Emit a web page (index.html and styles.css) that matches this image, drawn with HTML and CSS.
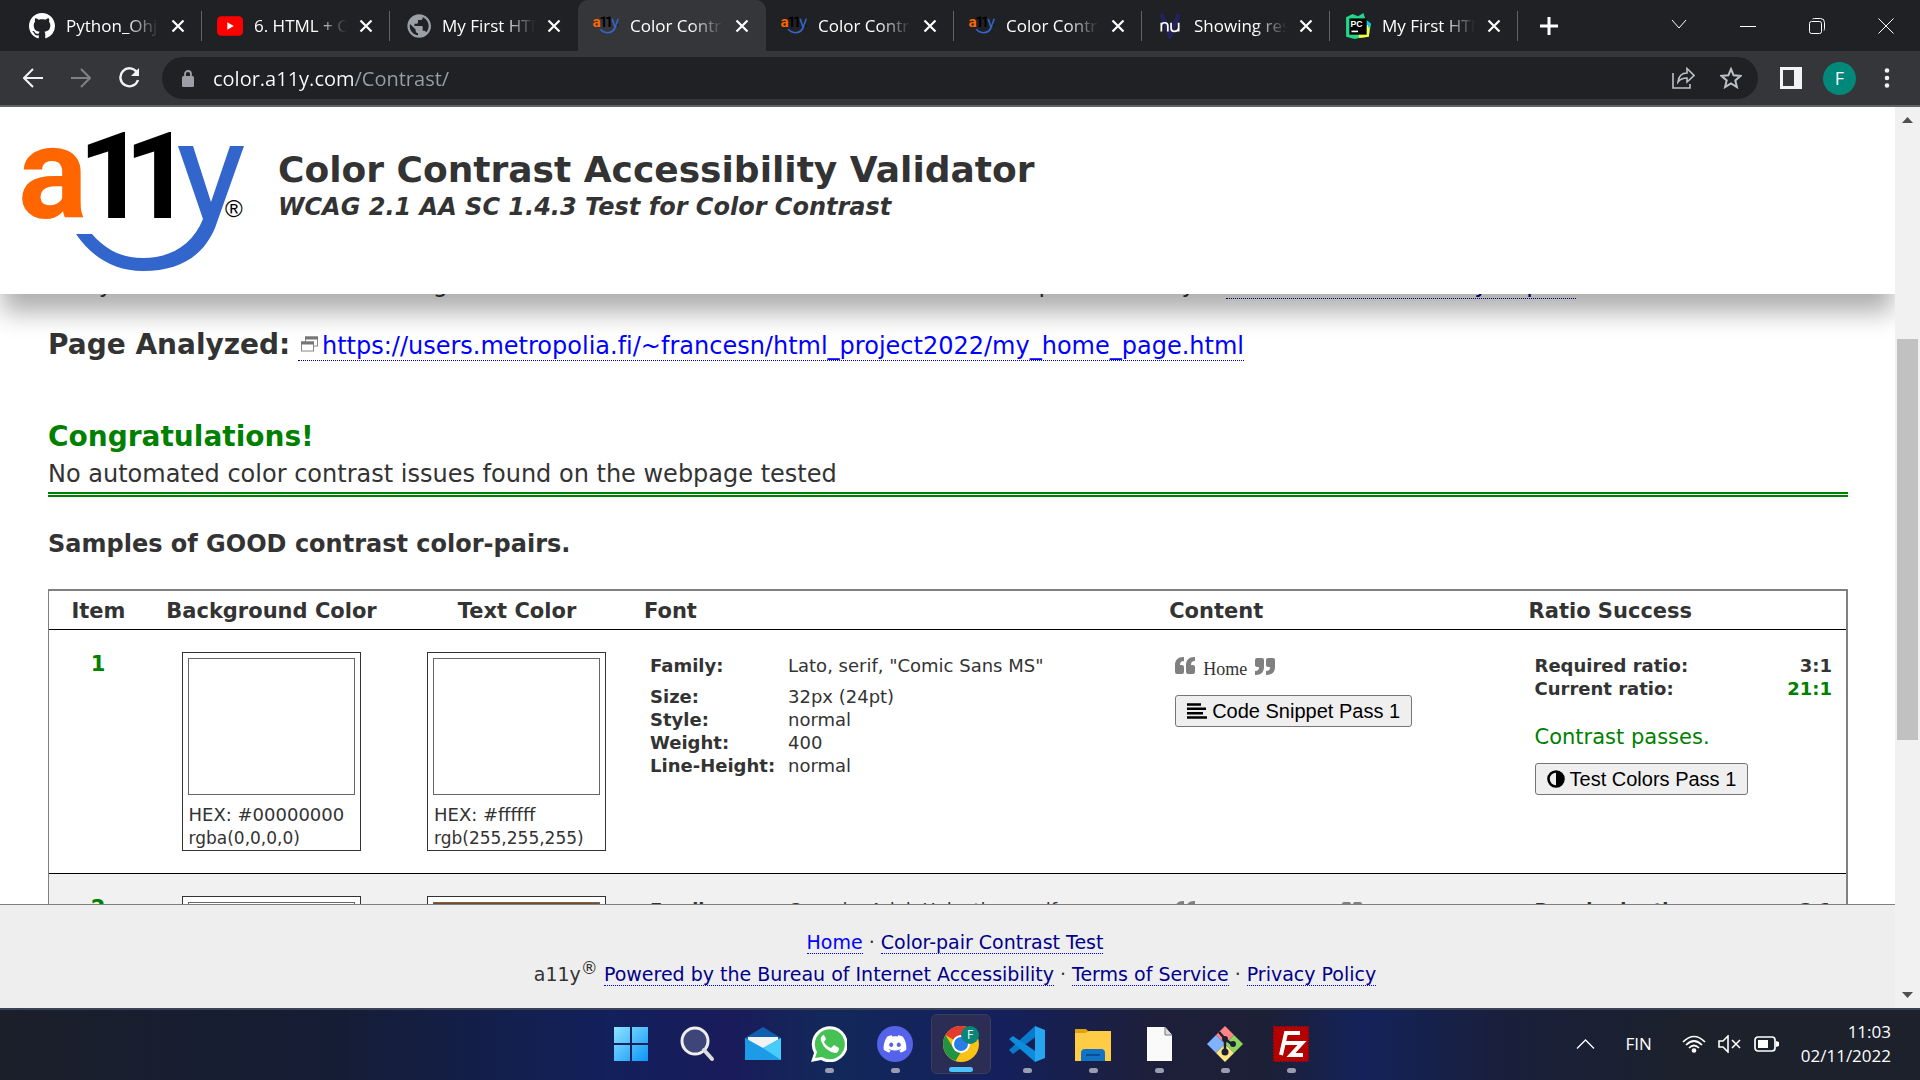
FILE: index.html
```html
<!DOCTYPE html>
<html lang="en">
<head>
<meta charset="utf-8">
<title>Color Contrast Accessibility Validator</title>
<link rel="stylesheet" href="styles.css">
</head>
<body>
<svg class="defs" aria-hidden="true">
  <symbol id="close" viewBox="0 0 14 14"><path d="M1.500 1.500l11 11M12.500 1.500l-11 11" stroke="currentColor" stroke-width="2.200" fill="none"/></symbol>
  <symbol id="a11y" viewBox="0 0 222 139">
    <text x="-4" y="86" font-size="130" class="logo-type" fill="#f60">a</text>
    <text x="56 102" y="86" font-size="120" class="logo-type" fill="#000">11</text>
    <path d="M156 14h15l18 56 19-56h14l-29 82C181 124 158 139 121 139 91 139 69 124 54 102h16c13 15 29 24 51 24 29 0 50-14 60-39z" fill="#36c"/>
    <text x="203" y="85" font-size="24" class="logo-mark">®</text>
  </symbol>
  <symbol id="quote-left" viewBox="0 0 20 18"><path d="M9 0v4C6 4 5 5.500 5 8h2a2 2 0 0 1 2 2v5a2 2 0 0 1-2 2H2a2 2 0 0 1-2-2V8C0 3 3 0 8 0zM20 0v4c-3 0-4 1.500-4 4h2a2 2 0 0 1 2 2v5a2 2 0 0 1-2 2h-5a2 2 0 0 1-2-2V8c0-5 3-8 8-8z" fill="#808080"/></symbol>
</svg>

<header class="browser">
  <div class="tabs">
    <div class="tab"><svg class="favicon" viewBox="0 0 16 16"><path fill="#fff" d="M8 0C3.580 0 0 3.580 0 8c0 3.540 2.290 6.530 5.470 7.590.4.070.55-.17.55-.38 0-.19-.01-.82-.01-1.490-2.010.37-2.530-.49-2.690-.94-.09-.23-.48-.94-.82-1.130-.28-.15-.68-.52-.01-.53.63-.01 1.080.58 1.230.82.72 1.210 1.870.87 2.330.66.07-.52.28-.87.51-1.070-1.780-.2-3.640-.89-3.640-3.950 0-.87.31-1.590.82-2.150-.08-.2-.36-1.020.08-2.120 0 0 .67-.21 2.200.82.64-.18 1.320-.27 2-.27.68 0 1.360.09 2 .27 1.530-1.040 2.200-.82 2.200-.82.44 1.100.16 1.920.08 2.120.51.56.82 1.270.82 2.150 0 3.070-1.870 3.750-3.650 3.950.29.25.54.73.54 1.480 0 1.070-.01 1.930-.01 2.200 0 .21.15.46.55.38A8.013 8.013 0 0 0 16 8c0-4.420-3.580-8-8-8z"/></svg><span class="tab-title">Python_Ohjelmointi</span><button class="tab-close" aria-label="Close tab"><svg><use href="#close"/></svg></button></div>
    <div class="tab"><svg class="favicon" viewBox="0 0 24 24"><rect y="3" width="24" height="18" rx="4" fill="#f00"/><path d="M9.500 8.500v7l6-3.500z" fill="#fff"/></svg><span class="tab-title">6. HTML + CSS</span><button class="tab-close" aria-label="Close tab"><svg><use href="#close"/></svg></button></div>
    <div class="tab tab-last"><svg class="favicon" viewBox="0 1 22 22"><path fill="#9aa0a6" d="M12 2C6.480 2 2 6.480 2 12s4.480 10 10 10 10-4.480 10-10S17.520 2 12 2zm-1 17.930c-3.950-.49-7-3.850-7-7.930 0-.62.08-1.210.21-1.790L9 15v1c0 1.100.9 2 2 2v1.930zm6.900-2.540c-.26-.81-1-1.390-1.900-1.390h-1v-3c0-.55-.45-1-1-1H8v-2h2c.55 0 1-.45 1-1V7h2c1.100 0 2-.9 2-2v-.41c2.930 1.190 5 4.060 5 7.410 0 2.080-.8 3.970-2.100 5.390z"/></svg><span class="tab-title">My First HTML page</span><button class="tab-close" aria-label="Close tab"><svg><use href="#close"/></svg></button></div>
    <div class="tab tab-active"><svg class="favicon" viewBox="0 0 222 222"><use href="#a11y" y="30" width="222" height="150"/></svg><span class="tab-title">Color Contrast</span><button class="tab-close" aria-label="Close tab"><svg><use href="#close"/></svg></button></div>
    <div class="tab"><svg class="favicon" viewBox="0 0 222 222"><use href="#a11y" y="30" width="222" height="150"/></svg><span class="tab-title">Color Contrast</span><button class="tab-close" aria-label="Close tab"><svg><use href="#close"/></svg></button></div>
    <div class="tab"><svg class="favicon" viewBox="0 0 222 222"><use href="#a11y" y="30" width="222" height="150"/></svg><span class="tab-title">Color Contrast</span><button class="tab-close" aria-label="Close tab"><svg><use href="#close"/></svg></button></div>
    <div class="tab"><svg class="favicon" viewBox="0 0 24 24"><path d="M4 1l8 20 8-20" fill="none" stroke="#25215f" stroke-width="4"/><path d="M4 17V9M4 12q0-3 3-3t3 3v5M13 9v5q0 3 3 3t4-3M20 9v8" fill="none" stroke="#fff" stroke-width="1.600"/></svg><span class="tab-title">Showing results</span><button class="tab-close" aria-label="Close tab"><svg><use href="#close"/></svg></button></div>
    <div class="tab"><svg class="favicon" viewBox="0 0 24 24"><path d="M1 4l6-3 5 2 5-3 2 6 5 4-2 12-9 1-4 1-8-2z" fill="#21d789"/><path d="M23 10l-1 12-9 1-1-8z" fill="#fcf84a"/><path d="M19 6l5 4-2 4z" fill="#07c3f2"/><rect x="4" y="5" width="16" height="15" fill="#000"/><text x="5" y="13" class="pc-mark">PC</text><path d="M6 17h6" stroke="#fff" stroke-width="1.500"/></svg><span class="tab-title">My First HTML page</span><button class="tab-close" aria-label="Close tab"><svg><use href="#close"/></svg></button></div>
    <button class="new-tab" aria-label="New tab"><svg width="18" height="18" viewBox="0 0 18 18"><path d="M9 0v18M0 9h18" stroke="#fff" stroke-width="3"/></svg></button>
    <div class="window-controls">
      <button aria-label="Search tabs"><svg width="16" height="16" viewBox="0 0 16 16"><path d="M1 2l7 8 7-8"/></svg></button>
      <button aria-label="Minimize"><svg width="16" height="16" viewBox="0 0 16 16"><path d="M0 8.500h16"/></svg></button>
      <button aria-label="Restore"><svg width="16" height="16" viewBox="0 0 16 16"><rect x=".5" y="3.500" width="12" height="12" rx="2"/><path d="M3.500 1q1-.5 2-.5h6q4 0 4 4v6q0 1-.5 2"/></svg></button>
      <button aria-label="Close"><svg width="16" height="16" viewBox="0 0 16 16"><path d="M.5.5l15 15M15.500.5l-15 15"/></svg></button>
    </div>
  </div>
  <div class="toolbar">
    <button aria-label="Back"><svg width="20" height="20" viewBox="0 0 20 20"><path d="M20 10H2M10 1l-9 9 9 9" fill="none" stroke="#f1f3f4" stroke-width="2"/></svg></button>
    <button aria-label="Forward"><svg width="20" height="20" viewBox="0 0 20 20"><path d="M0 10h18M10 1l9 9-9 9" fill="none" stroke="#808184" stroke-width="2"/></svg></button>
    <button aria-label="Reload"><svg width="22" height="22" viewBox="0 0 22 22"><path d="M18 5.500A9 9 0 1 0 19 13" fill="none" stroke="#f1f3f4" stroke-width="2.400"/><path d="M20 1v8h-8z" fill="#f1f3f4"/></svg></button>
    <div class="omnibox">
      <svg width="12" height="17" viewBox="0 0 12 17"><path d="M3 7V4a3 3 0 0 1 6 0v3" fill="none" stroke="#9aa0a6" stroke-width="1.800"/><rect y="6" width="12" height="11" rx="1.500" fill="#9aa0a6"/></svg>
      <input class="url" type="text" aria-label="Address" value="color.a11y.com/Contrast/">
      <button aria-label="Share"><svg width="23" height="22" viewBox="0 0 23 22" fill="none" stroke="#bdc1c6" stroke-width="1.600"><path d="M1 6v15h17v-4"/><path d="M6 15q1-9 9-9V1.500l7 7-7 6.500v-4q-6 0-9 4z"/></svg></button>
      <button aria-label="Bookmark this page"><svg width="22" height="22" viewBox="0 0 22 22"><path d="M11 2l2.600 6.300 6.900.6-5.200 4.500 1.600 6.700-5.900-3.600-5.900 3.600 1.600-6.700L1.500 8.900l6.900-.6z" fill="none" stroke="#bdc1c6" stroke-width="2"/></svg></button>
    </div>
    <button class="side-panel" aria-label="Side panel"><svg width="22" height="22" viewBox="0 0 22 22"><path d="M0 0h22v22H0zM3 3v16h11V3z" fill="#f1f3f4" fill-rule="evenodd"/></svg></button>
    <button class="avatar">F</button>
    <button class="menu" aria-label="Menu"><svg width="6" height="20" viewBox="0 0 6 20" fill="#f1f3f4"><circle cx="3" cy="2.500" r="2.300"/><circle cx="3" cy="10" r="2.300"/><circle cx="3" cy="17.500" r="2.300"/></svg></button>
  </div>
</header>

<div class="viewport">
  <div class="page">
    <header class="masthead">
      <svg class="logo" viewBox="0 0 222 139" role="img" aria-label="a11y"><use href="#a11y"/></svg>
      <div class="titles">
        <h1>Color Contrast Accessibility Validator</h1>
        <p class="subtitle">WCAG 2.1 AA SC 1.4.3 Test for Color Contrast</p>
      </div>
    </header>

    <main class="content">
      <p class="intro">Many web color contrast issues go unnoticed until each item is reviewed in full so please do try a <a href="#">free Web Accessibility Report</a></p>
      <p class="analyzed"><strong>Page Analyzed:</strong> <a href="#"><svg width="17" height="16" viewBox="0 0 17 16" fill="#fff" stroke="#888"><rect x="4.500" y="1" width="12" height="9"/><path d="M4 2h13" stroke-width="3" stroke="#777"/><rect x=".5" y="6" width="12" height="9"/><path d="M0 7h13" stroke-width="3" stroke="#777"/></svg>https://users.metropolia.fi/~francesn/html_project2022/my_home_page.html</a></p>
      <section class="verdict">
        <h2>Congratulations!</h2>
        <p>No automated color contrast issues found on the webpage tested</p>
      </section>
      <h3>Samples of GOOD contrast color-pairs.</h3>
      <table class="results">
        <colgroup><col class="c-item"><col class="c-bg"><col class="c-text"><col class="c-font"><col class="c-content"><col class="c-ratio"></colgroup>
        <thead>
          <tr><th class="mid">Item</th><th class="mid">Background Color</th><th class="mid">Text Color</th><th>Font</th><th>Content</th><th>Ratio Success</th></tr>
        </thead>
        <tbody>
          <tr>
            <td class="item">1</td>
            <td class="color"><div class="swatch"><div class="chip"></div><p>HEX: #00000000</p><p class="rgb">rgba(0,0,0,0)</p></div></td>
            <td class="color"><div class="swatch"><div class="chip"></div><p>HEX: #ffffff</p><p class="rgb">rgb(255,255,255)</p></div></td>
            <td><dl class="font-info"><dt>Family:</dt><dd class="family">Lato, serif, "Comic Sans MS"</dd><dt>Size:</dt><dd>32px (24pt)</dd><dt>Style:</dt><dd>normal</dd><dt>Weight:</dt><dd>400</dd><dt>Line-Height:</dt><dd>normal</dd></dl></td>
            <td><div class="sample"><svg class="quote"><use href="#quote-left"/></svg><span>Home</span><svg class="quote quote-right"><use href="#quote-left"/></svg></div>
              <button class="action"><svg width="20" height="16" viewBox="0 0 20 16"><path d="M0 1.500h14M0 5.800h19M0 10.200h16M0 14.500h20" stroke="#000" stroke-width="2.600"/></svg>Code Snippet Pass 1</button></td>
            <td><dl class="ratio"><dt>Required ratio:</dt><dd>3:1</dd><dt>Current ratio:</dt><dd class="good">21:1</dd></dl>
              <p class="passes">Contrast passes.</p>
              <button class="action"><svg width="18" height="18" viewBox="0 0 18 18"><circle cx="9" cy="9" r="7.500" fill="none" stroke="#000" stroke-width="2.600"/><path d="M9 1a8 8 0 0 1 0 16z"/></svg>Test Colors Pass 1</button></td>
          </tr>
          <tr>
            <td class="item">2</td>
            <td class="color"><div class="swatch"><div class="chip"></div><p>HEX: #ffffff</p></div></td>
            <td class="color"><div class="swatch"><div class="chip chip-brown"></div><p>HEX: #8b4513</p></div></td>
            <td><dl class="font-info"><dt>Family:</dt><dd class="family">Georgia, Arial, Helvetica, serif</dd></dl></td>
            <td><div class="sample"><svg class="quote"><use href="#quote-left"/></svg><span>My First webpage</span><svg class="quote quote-right"><use href="#quote-left"/></svg></div></td>
            <td><dl class="ratio"><dt>Required ratio:</dt><dd>3:1</dd></dl></td>
          </tr>
        </tbody>
      </table>
    </main>

    <footer class="footer">
      <p><a class="home" href="#">Home</a> · <a href="#">Color-pair Contrast Test</a></p>
      <p>a11y<sup>®</sup> <a href="#">Powered by the Bureau of Internet Accessibility</a> · <a href="#">Terms of Service</a> · <a href="#">Privacy Policy</a></p>
    </footer>
  </div>
  <div class="scrollbar">
    <svg width="11" height="6" viewBox="0 0 11 6"><path d="M5.500 0L11 6H0z" fill="#505050"/></svg>
    <div class="track"><div class="thumb"></div></div>
    <svg width="11" height="6" viewBox="0 0 11 6"><path d="M0 0h11L5.500 6z" fill="#505050"/></svg>
  </div>
</div>

<footer class="taskbar">
  <nav class="apps">
    <button class="app" aria-label="Start"><svg viewBox="0 0 36 36"><defs><linearGradient id="win" x2="1" y2="1"><stop stop-color="#8fe3ff"/><stop offset="1" stop-color="#0a96f8"/></linearGradient></defs><path d="M1 1h16v16H1zM19 1h16v16H19zM1 19h16v16H1zM19 19h16v16H19z" fill="url(#win)"/></svg></button>
    <button class="app" aria-label="Search"><svg viewBox="0 0 36 36"><circle cx="16" cy="15" r="13" fill="#3e4679" stroke="#eee" stroke-width="3"/><path d="M25 24l8 9" stroke="#ddd" stroke-width="4" stroke-linecap="round"/></svg></button>
    <button class="app" aria-label="Mail"><svg viewBox="0 0 36 36"><path d="M0 12L18 1l18 11v10H0z" fill="#0f5fae"/><path d="M3 11h30v8L18 25 3 19z" fill="#f3f3f3"/><path d="M0 12l18 10 18-10v22H0z" fill="#1d9be6"/><path d="M36 12v22L18 22z" fill="#46cdfb"/></svg></button>
    <button class="app running" aria-label="WhatsApp"><svg viewBox="0 0 36 36"><path d="M0 36l3-9A18 18 0 1 1 10 34z" fill="#fff"/><path d="M4 32l2-6A15 15 0 1 1 11 31z" fill="#46c254"/><path d="M12 9q-3 2-2 6 4 10 14 12 4 0 4-5l-5-3-3 3q-5-2-7-6l2-3-2-4z" fill="#fff"/></svg></button>
    <button class="app running" aria-label="Discord"><svg viewBox="0 0 36 36"><circle cx="18" cy="18" r="18" fill="#5562ea"/><path transform="translate(6.600 6.500) scale(.95)" fill="#fff" d="M20.317 4.370a19.800 19.800 0 00-4.885-1.515l-.69 1.286c-1.845-.276-3.680-.276-5.487 0L8.560 2.855A19.700 19.700 0 003.670 4.370C.533 9.046-.319 13.580.1 18.058c2.053 1.508 4.041 2.423 5.993 3.030.49-.66.95-1.320 1.310-2.020l-1.920-1.020.48-.43c3.930 1.793 8.180 1.793 12.061 0l.5.430-1.930 1.020c.36.698.81 1.390 1.270 2.020 1.961-.607 3.950-1.522 6.002-3.030.5-5.177-.838-9.674-3.549-13.688zM8.020 15.331c-1.182 0-2.157-1.086-2.157-2.419s.956-2.419 2.157-2.419c1.211 0 2.176 1.095 2.157 2.419 0 1.333-.956 2.419-2.157 2.419zm7.975 0c-1.183 0-2.157-1.086-2.157-2.419s.955-2.419 2.157-2.419c1.211 0 2.176 1.095 2.157 2.419 0 1.333-.946 2.419-2.157 2.419z"/></svg></button>
    <button class="app running active" aria-label="Chrome"><svg viewBox="0 0 36 36"><circle cx="18" cy="18" r="18" fill="#fbc116"/><path d="M18 18L2.400 9A18 18 0 0 1 33.600 9z" fill="#e33b2e"/><path d="M2.400 9l8 13L18 26l-5.500 9A18 18 0 0 1 2.400 9z" fill="#229342"/><circle cx="18" cy="18" r="9" fill="#fff"/><circle cx="18" cy="18" r="7" fill="#2a7de9"/><circle cx="27" cy="9" r="9" fill="#0a8577"/><text x="24" y="13" class="badge">F</text></svg></button>
    <button class="app running" aria-label="Visual Studio Code"><svg viewBox="0 0 36 36"><path d="M26 0L0 24l4 4L29 9z" fill="#0a7acc"/><path d="M4 10L0 13l26 23 3-9z" fill="#0f8bdb"/><path d="M26 0l10 4v28l-10 4z" fill="#27a6f0"/></svg></button>
    <button class="app running" aria-label="File Explorer"><svg viewBox="0 0 36 36"><path d="M0 3h11l4 4v6H0z" fill="#e0a010"/><path d="M0 7h10l4-2h22v30H0z" fill="#ffcc45"/><path d="M6 35V27q0-4 4-4h16q4 0 4 4v8z" fill="#1173c5"/><path d="M11 29h14" stroke="#0b4f8c" stroke-width="2"/></svg></button>
    <button class="app running" aria-label="Document"><svg viewBox="0 0 36 36"><path d="M6 1h18l7 8v26H6z" fill="#fafafa"/><path d="M24 1v8h7" fill="#ddd" stroke="#777"/></svg></button>
    <button class="app running" aria-label="Git"><svg viewBox="0 0 36 36"><path d="M18 0l9 9-9 9-9-9z" fill="#ff8585"/><path d="M9 9l9 9-9 9-9-9z" fill="#80b3ff"/><path d="M27 9l9 9-9 9-9-9z" fill="#8fd45f"/><path d="M18 18l9 9-9 9-9-9z" fill="#ffe680"/><path d="M12 6l6 7v13M18 13l8 6" fill="none" stroke="#1c2036" stroke-width="2.500"/><g fill="#1c2036"><circle cx="18" cy="13" r="3"/><circle cx="18" cy="26" r="3.500"/><circle cx="26" cy="18" r="3"/></g></svg></button>
    <button class="app running" aria-label="FileZilla"><svg viewBox="0 0 36 36"><rect x="1" y="1" width="34" height="34" fill="#b50000" stroke="#b50000" stroke-width="2" stroke-dasharray="2 1"/><path d="M8 29l5-22h14M11 17h11M16 17h13L18 29h12" fill="none" stroke="#fff" stroke-width="4"/></svg></button>
  </nav>
  <div class="tray">
    <button aria-label="Hidden icons"><svg width="19" height="10" viewBox="0 0 19 10"><path d="M1 9.500L9.500 1 18 9.500" fill="none" stroke="#fff" stroke-width="1.300"/></svg></button>
    <button class="lang">FIN</button>
    <button class="status" aria-label="Network, volume, battery">
      <svg width="24" height="18" viewBox="0 0 24 18" fill="none" stroke="#fff" stroke-width="1.700"><path d="M1 7Q12-4 23 7M4 10q8-8 16 0M7 13q5-5 10 0"/><circle cx="12" cy="15.500" r="1.500" fill="#fff"/></svg>
      <svg width="24" height="18" viewBox="0 0 24 18" fill="none" stroke="#fff" stroke-width="1.600"><path d="M1 6h4l5-5v16l-5-5H1zM14 5l8 8M22 5l-8 8"/></svg>
      <svg width="25" height="16" viewBox="0 0 25 16"><rect x="1" y="1" width="20" height="14" rx="3" fill="none" stroke="#fff" stroke-width="1.700"/><rect x="4" y="4" width="10" height="8" fill="#fff"/><path d="M22 5l3 1v4l-3 1z" fill="#fff"/></svg>
    </button>
    <button class="clock">11:03<br>02/11/2022</button>
  </div>
</footer>
</body>
</html>
```

FILE: styles.css
```css
* { box-sizing: border-box; }
body { margin: 0; height: 100vh; display: flex; flex-direction: column; overflow: hidden; font-family: "DejaVu Sans", Verdana, sans-serif; color: #333; }
h1, h2, h3, p, dl, dd { margin: 0; }
button { border: 0; padding: 0; background: none; color: inherit; font: inherit; }
svg { display: block; flex: none; }
.defs { position: absolute; width: 0; height: 0; }
.logo-type { font-family: Roboto, "Liberation Sans", sans-serif; font-weight: 700; }
.logo-mark { font-family: "Liberation Sans", sans-serif; fill: #000; }
.pc-mark { font: 700 8px "Liberation Sans", sans-serif; fill: #fff; }
.badge { font: 12px "Open Sans", sans-serif; fill: #fff; }

/* Browser chrome */
.browser { flex: none; background: #35363a; border-bottom: 2px solid #5f6368; font-family: "Open Sans", "Noto Sans", sans-serif; color: #fff; }
.tabs { display: flex; align-items: center; height: 51px; padding-left: 14px; background: #202124; }
.tab { position: relative; display: flex; align-items: center; flex: none; width: 188px; height: 51px; padding: 0 17px 0 15px; }
.tab:not(.tab-active, .tab-last)::after { content: ""; position: absolute; right: 0; top: 11px; width: 1px; height: 30px; background: #5f6368; }
.tab-active { background: #35363a; border-radius: 10px 10px 0 0; }
.favicon { width: 26px; height: 26px; margin-right: 11px; }
.tab-title { flex: 1; overflow: hidden; white-space: nowrap; font-size: 17px; line-height: 24px; mask-image: linear-gradient(90deg, #000 65%, transparent); }
.tab-close { width: 14px; height: 14px; margin-left: 12px; }
.tab-close svg { width: 14px; height: 14px; }
.new-tab { margin-left: 22px; }
.window-controls { display: flex; margin-left: auto; height: 42px; }
.window-controls button { display: grid; place-items: center; width: 69px; }
.window-controls svg { fill: none; stroke: #fff; }
.toolbar { display: flex; align-items: center; height: 54px; padding: 0 30px 0 23px; gap: 28px; }
.omnibox { flex: 1; display: flex; align-items: center; height: 42px; padding: 0 16px 0 20px; margin-left: -7px; border-radius: 21px; background: #202124; }
.url { flex: 1; min-width: 0; margin-left: 19px; border: 0; padding: 1px 0 0; outline: 0; font: 20px/28px "Open Sans", "Noto Sans", sans-serif; background: linear-gradient(90deg, #fff 140px, #9aa0a6 140px); background-clip: text; color: transparent; }
.omnibox button { margin-left: 25px; }
.side-panel { margin-left: -6px; }
.avatar { width: 33px; height: 33px; border-radius: 50%; background: #00897b; font-size: 18px; line-height: 33px; margin-left: -7px; }

/* Validator page */
.viewport { flex: 1; min-height: 0; display: flex; }
.page { flex: 1; min-width: 0; display: flex; flex-direction: column; background: #fff; overflow: hidden; }
.masthead { position: relative; z-index: 1; flex: none; display: flex; gap: 34px; padding: 25px 22px 23px; background: #fff; box-shadow: 0 20px 24px -2px rgba(0, 0, 0, .32); }
.logo { width: 222px; height: 139px; overflow: visible; }
.titles { padding-top: 16px; }
h1 { font-size: 36px; line-height: 44px; }
.subtitle { font-size: 24px; line-height: 30px; font-weight: 700; font-style: italic; }
.content { flex: 1; min-height: 0; overflow: hidden; padding: 0 47px 0 48px; }
a { color: #00f; text-decoration: none; border-bottom: 1px dotted #00008b; }
.intro { margin-top: -25px; font-size: 24px; line-height: 30px; white-space: nowrap; }
.intro a { color: #00008b; }
.analyzed { margin-top: 28px; font-size: 24px; line-height: 36px; font-variant-ligatures: none; }
.analyzed strong { font-size: 28px; }
.analyzed a { padding-left: 3px; }
.analyzed svg { display: inline-block; margin-right: 4px; vertical-align: 2px; }
.verdict { margin-top: 54px; border-bottom: 5px double #008000; font-size: 24px; line-height: 36px; }
h2 { font-size: 28px; line-height: 38px; color: #008000; }
h3 { margin: 32px 0 30px; font-size: 24px; line-height: 30px; }
.results { width: 100%; table-layout: fixed; border-collapse: separate; border-spacing: 0; border: solid #808080; border-width: 2px 2px 2px 1px; font-size: 18px; line-height: 23px; }
.c-item { width: 98px; }
.c-bg { width: 248px; }
.c-text { width: 243px; }
.c-content { width: 20%; }
.c-ratio { width: 18%; }
th { height: 39px; padding: 1px 5px 0 6px; font-size: 21px; line-height: 26px; text-align: left; border-bottom: 1px solid #000; }
.mid { text-align: center; }
td { padding: 22px 14px 22px 12px; vertical-align: top; border-bottom: 1px solid #000; }
tbody tr:nth-child(even) { background: #f1f1f1; }
.item { padding-left: 14px; text-align: center; font-size: 21px; line-height: 25px; font-weight: 700; color: #008000; }
.color { padding-left: 14px; padding-right: 14px; }
.swatch { width: 179px; height: 199px; margin: 0 auto; padding: 5px; border: 1px solid #333; background: #fff; white-space: nowrap; }
.swatch p { padding-left: 1px; }
.swatch .rgb { font-size: 17px; line-height: 24px; }
.chip { height: 137px; margin-bottom: 8px; border: 1px solid #666; }
.chip-brown { background: #8b4513; }
.font-info { display: grid; grid-template-columns: 138px 1fr; padding-top: 2px; }
.font-info .family { padding-bottom: 8px; }
dt { font-weight: 700; }
.sample { display: flex; align-items: center; gap: 8px; padding-top: 2px; font: 18px/23px "Liberation Serif", serif; }
.sample span { padding-top: 4px; margin-bottom: -4px; }
.quote { width: 20px; height: 18px; }
.quote-right { transform: rotate(180deg); }
.action { display: flex; align-items: center; gap: 5px; height: 32px; padding: 0 11px; border: 1px solid #767676; border-radius: 3px; background: #efefef; color: #000; font: 20px/24px "Liberation Sans", Arial, sans-serif; }
.sample + .action { margin-top: 18px; }
.ratio { display: grid; grid-template-columns: 1fr auto; padding-top: 2px; font-weight: 700; }
.ratio dd { text-align: right; }
.good, .passes { color: #008000; }
.passes { margin: 23px 0 12px; font-size: 21px; line-height: 28px; }
.footer { flex: none; height: 104px; padding: 21px 0 0 15px; border-top: 1px solid #808080; background: #eee; text-align: center; font-size: 19px; line-height: 32px; }
.footer a { color: #00008b; border-color: #00f; }
.footer .home { color: #00f; }
sup { font-size: 17px; line-height: 0; }
.scrollbar { flex: none; width: 25px; display: flex; flex-direction: column; align-items: center; padding: 10px 0; background: #f1f1f1; }
.track { flex: 1; width: 21px; padding: 216px 0 252px; }
.thumb { height: 100%; background: #c1c1c1; }

/* Taskbar */
.taskbar { flex: none; position: relative; display: flex; justify-content: center; height: 72px; border-top: 2px solid #3c4356; background: linear-gradient(90deg, #1b1f2a 0, #151d36 18%, #12205c 32%, #1a1b5a 38%, #12285a 43%, #14205c 52%, #1d1f3a 60%, #1c2036 66%, #13225a 71%, #191f3c 78%, #1c212c 88%); color: #fff; font-family: "Open Sans", "Noto Sans", sans-serif; }
.apps { display: flex; gap: 6px; padding: 4px 0 0 2px; }
.app { position: relative; width: 60px; height: 60px; display: grid; place-items: center; }
.app svg { width: 36px; height: 36px; }
.running::after { content: ""; position: absolute; left: 26px; bottom: 1px; width: 9px; height: 5px; border-radius: 3px; background: #9a9db0; }
.active { border: 1px solid #3a3c60; border-radius: 6px; background: #2c2d55; }
.active::after { left: 17px; width: 24px; background: #4cc2ff; }
.tray { position: absolute; right: 29px; top: 0; height: 68px; display: flex; align-items: center; font-size: 17px; line-height: 24px; }
.lang { margin: 0 30px; }
.status { display: flex; align-items: center; gap: 12px; }
.clock { margin-left: 22px; text-align: right; }
```
